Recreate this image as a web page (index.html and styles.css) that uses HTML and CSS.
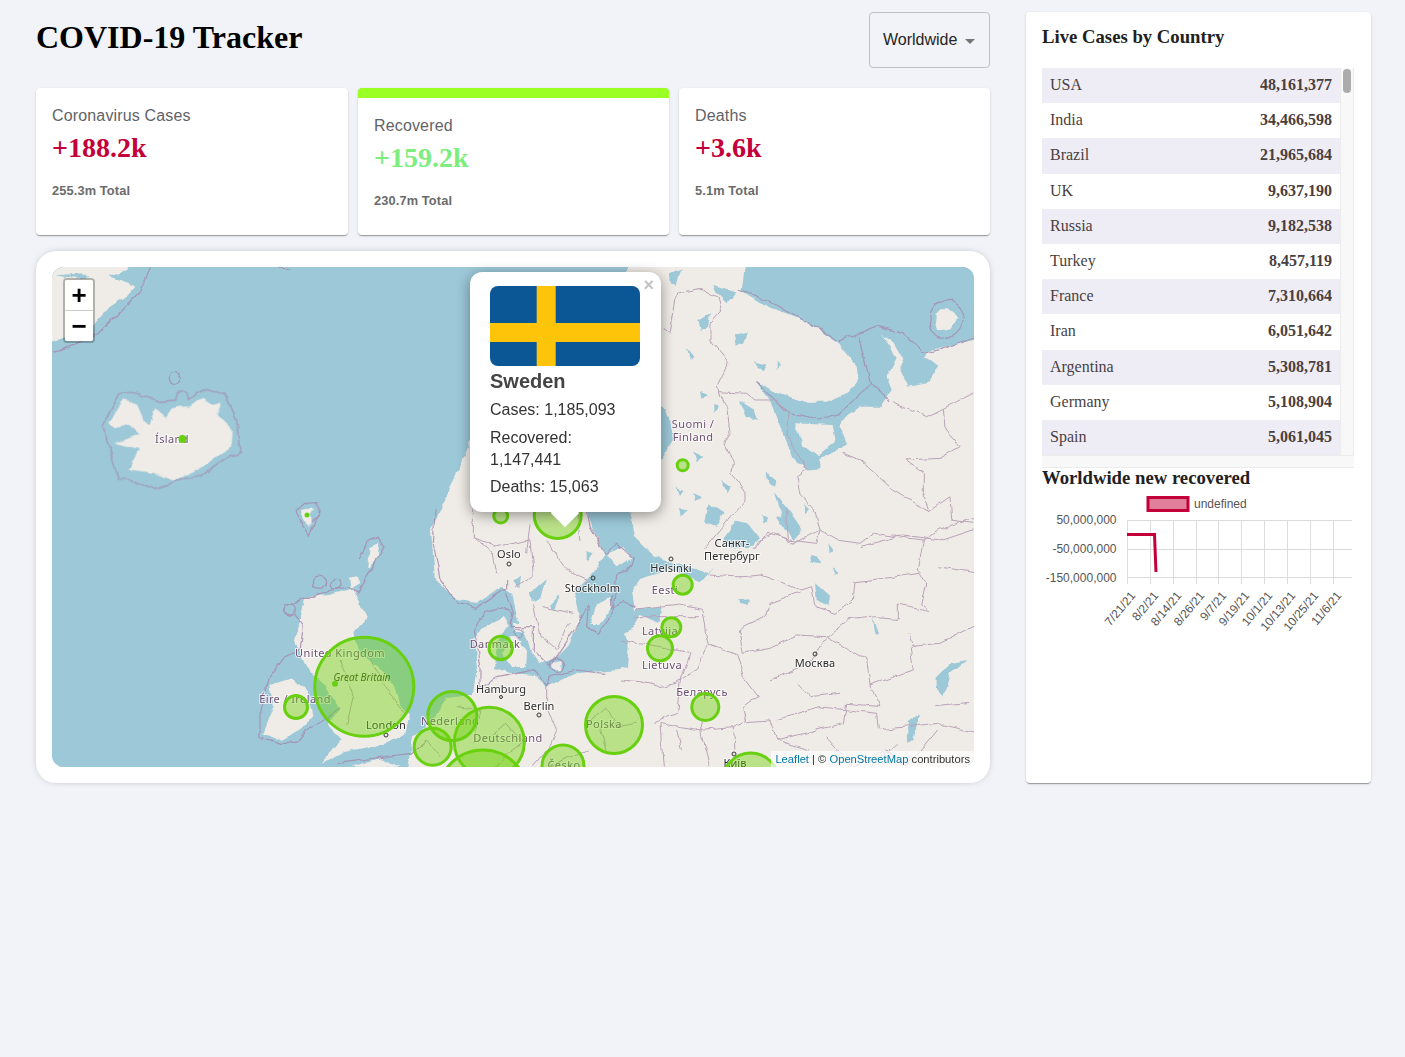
FILE: index.html
```html
<!DOCTYPE html>
<html lang="en">
<head>
<meta charset="utf-8">
<title>COVID-19 Tracker</title>
<link rel="stylesheet" href="styles.css">
</head>
<body>
<div class="app">
  <main class="left">
    <header class="header">
      <h1 class="title">COVID-19 Tracker</h1>
      <div class="select"><span>Worldwide</span><i class="caret"></i></div>
    </header>
    <section class="stats">
      <article class="stat"><p class="stat-label">Coronavirus Cases</p><h2 class="stat-num red">+188.2k</h2><p class="stat-total">255.3m Total</p></article>
      <article class="stat active"><p class="stat-label">Recovered</p><h2 class="stat-num green">+159.2k</h2><p class="stat-total">230.7m Total</p></article>
      <article class="stat"><p class="stat-label">Deaths</p><h2 class="stat-num red">+3.6k</h2><p class="stat-total">5.1m Total</p></article>
    </section>
    <section class="map-card">
      <div class="map">
        <svg class="map-svg" viewBox="52 267 922 500" width="922" height="500" aria-label="Map">
          <defs>
            <filter id="rough" x="-3%" y="-3%" width="106%" height="106%" color-interpolation-filters="sRGB">
              <feTurbulence type="fractalNoise" baseFrequency=".07" numOctaves="3" seed="7"/>
              <feDisplacementMap in="SourceGraphic" scale="6" xChannelSelector="R" yChannelSelector="G"/>
            </filter>
          </defs>
          <rect class="sea" x="40" y="250" width="960" height="540"/>
          <g filter="url(#rough)">
            <!-- Greenland, Iceland, Faroe -->
            <g transform="translate(40 260) scale(.33333)">
              <path class="land" d="M0 0H285L262 30 205 52 285 78 255 112 210 140 165 190 120 215 0 262Z"/>
              <path class="sea" d="M50 46 130 40 150 52 120 54 70 50Z"/>
              <path class="maritime" d="M36 278 170 225 300 95 332 20M716 22Q735 30 750 22"/>
              <path class="land" d="M205 490 222 465 252 418 290 430 312 482 328 492 345 448 378 470 395 445 420 440 450 440 490 410 518 432 545 425 530 462 578 510 575 555 500 612 430 650 400 662 345 640 265 628 296 570 222 552 298 522 262 490 225 505Z"/>
              <path class="maritime" d="M187 495 240 400 275 397 355 425 408 420A19 19 0 1 1 445 415L490 390 555 405 590 480 597 552A15 15 0 1 1 575 585L480 650 440 655 340 686 255 655 235 655Z"/>
              <circle class="maritime" cx="403" cy="355" r="18"/>
              <path class="maritime" d="M765 755Q790 722 835 725 850 770 810 790"/>
              <path class="land" d="M785 750 825 742 810 765 795 770Z"/>
            </g>
            <!-- Scandinavia, Russia and continental Europe -->
            <path class="land" d="M640 250 620 280 560 310 500 370 470 440 450 490 431 530 435 580 457 600 477 603 503 587 503 617 487 625 473 637 477 667 473 694 447 697 430 723 413 737 403 790H1000V250Z"/>
            <!-- Skagerrak, Kattegat, Baltic, Bothnia, gulfs of Finland and Riga -->
            <path class="sea" d="M500 587 512 592 517 617 527 637 530 650 540 664 557 657 570 643 580 617 575 592 596 570 605 553 593 530 587 510 620 470 640 430 661 405 670 418 673 440 660 460 640 490 630 510 635 537 653 555 670 563 687 566 707 573 715 568 707 574 700 582 673 570 640 580 632 592 635 610 663 607 657 623 640 614 629 642 627 668 620 670 577 673 547 687 533 675 510 673 495 668 497 642 508 625 503 617Z"/>
            <!-- Baltic islands -->
            <path class="land" d="M605 553 623 547 632 557 617 567ZM596 607 610 595 612 607 598 625 590 625ZM625 633 640 623V663L632 657ZM552 662 563 660 562 670 553 670ZM510 637 518 637 527 652 526 667 512 667 503 653ZM513 623 522 623 522 632 515 632ZM640 584 651 583 652 590 641 593Z"/>
            <!-- Barents and White seas -->
            <g transform="translate(460 260) scale(.33333)">
              <path class="sea" d="M860 -30 845 95 900 130 1030 180 1130 245 1190 320 1195 360 1170 395 1100 425 1020 425 940 395 885 360 930 420 960 500 1000 590 1040 632 1078 628 1078 590 1130 575 1162 555 1138 500 1160 470 1200 440 1260 440 1295 390 1280 350 1310 290 1260 220 1300 250 1330 300 1318 325 1345 380 1400 370 1435 320 1395 290 1400 275 1600 225V-30Z"/>
              <path class="land" d="M1005 490 1115 495 1125 545 1075 585 1030 560Z"/>
              <path class="land" d="M1430 165 1455 140 1495 170 1470 205 1435 212 1428 190Z"/>
              <path class="maritime" d="M1408 190Q1415 125 1470 118 1515 140 1515 175 1495 235 1440 235 1410 225 1408 190ZM835 90 880 105 950 135 1060 195 1135 245 1250 198 1330 220 1385 270 1415 278 1560 228M1195 228 1232 370 1140 460 1075 480 985 460 890 365M1232 370 1290 425"/>
              <path class="lake" d="M630 40 665 25 650 75 632 70ZM760 75 830 95 800 130 770 100ZM715 180 750 160 745 195 722 210ZM825 225 860 215 850 250 830 260ZM880 310 920 320 905 335ZM950 300 960 320 950 330ZM680 265 700 290 690 300ZM720 395 745 405 725 415ZM840 420 880 445 890 480 860 470ZM760 435 775 440 760 460ZM700 575 730 590 710 610ZM920 635 950 660 945 680 925 670ZM780 660 810 680 800 700ZM745 730 790 760 770 800 735 790ZM650 680 670 690 660 705ZM700 700 725 710 705 730ZM660 740 680 750 665 770ZM945 700 985 750 1025 810 1000 840 975 790 960 750ZM815 800 860 795 890 840 880 860 800 860ZM905 765 925 775 910 790ZM1035 730 1050 745 1035 760Z"/>
              <path class="border" d="M608 205 630 222 650 100 720 85 775 115 785 150 750 190 750 240 790 290 805 310 772 375 800 440 810 520 795 550 820 610 815 640 855 690 855 720 780 810 730 870"/>
              <path class="border" d="M780 395 860 400 885 420 950 420 985 460 985 530 1040 630 1010 650 1020 700 1060 740 1080 810 1000 850 940 820 900 840 880 870"/>
              <path class="border" d="M1560 390 1450 445 1400 470 1300 425M1450 445 1455 510 1500 560 1440 595 1335 600 1390 640 1390 710 1405 755 1470 710 1475 780 1540 790M1200 860 1330 825 1440 840 1560 800M1150 580 1200 600 1300 690 1400 750"/>
            </g>
            <!-- Britain, Ireland, North Sea borders -->
            <g transform="translate(240 510) scale(.33333)">
              <path class="land" d="M388 112 418 95 412 150 385 175ZM330 200 358 195 360 220 335 235ZM178 340 195 262 228 258 270 255 340 235 345 252 380 320 340 370 355 430 420 475 465 530 480 580 510 615 495 675 440 700 330 722 245 758 305 685 260 640 300 595 262 535 240 515 200 470 165 395Z"/>
              <path class="land" d="M88 525 160 505 200 545 220 615 190 652 125 690 70 670 102 590Z"/>
              <path class="land" d="M182 0 210 0 212 50 195 35Z"/>
              <path class="land" d="M330 770 420 745 480 770Z"/>
              <path class="maritime" d="M168 5 208 78 240 0M355 150 378 95 415 82 432 110 400 170 380 200 350 250 330 230 280 240 220 262 185 262 165 285 135 285 135 310 162 318 190 350 180 420 135 440 85 505 60 600 60 680 120 700 170 700 210 650 260 628 300 590M600 205 650 280 710 295 800 235 800 210M1040 0 1050 50 1095 130 1130 100 1180 145 1160 185 1130 195 1120 300 1150 275 1190 290M795 235 820 310 810 350 880 350 880 420 930 470 980 395 1045 285 1040 350 1075 370 1115 310 1115 250M700 360 735 305 790 290 815 310 810 350M700 360 720 470 720 540 760 505 880 480 925 530M925 530 930 500 1010 480 1090 490M585 0 580 100 600 205M290 760 510 730 560 690"/>
              <circle class="maritime" cx="237" cy="218" r="20"/>
              <circle class="maritime" cx="288" cy="222" r="15"/>
              <circle class="maritime" cx="150" cy="300" r="16"/>
              <circle class="maritime" cx="952" cy="465" r="22"/>
              <circle class="maritime" cx="835" cy="370" r="14"/>
              <path class="lake" d="M870 250 920 205 905 265 875 270ZM930 285 960 255 940 300ZM820 215 840 200 835 235ZM1040 120 1060 130 1040 160Z"/>
              <path class="border" d="M700 0 700 80 770 110 870 90 880 200 825 230M700 80 760 130 770 190M920 90 980 180 1050 210 1010 250M880 280 900 380 950 420 985 340M905 290 1000 310M745 680 800 640 850 700 760 770M650 590 720 600 700 700M300 450 340 560 320 650M390 440 440 540 500 610M560 690 600 740M920 530 920 590 950 660 930 710 880 770M1040 640 1100 590 1130 650 1190 640M1080 650 1100 730M920 770 1040 720M860 130 870 40M1010 0 1020 90"/>
            </g>
            <!-- Russia and Baltic region borders -->
            <g transform="translate(620 510) scale(.33333)">
              <path class="lake" d="M310 88 350 32 385 40 420 85 385 118 335 112ZM470 15 510 25 545 70 495 60ZM570 135 595 140 600 160 575 155ZM585 220 630 260 625 285 590 270ZM358 268 385 265 380 285 360 282ZM640 170 658 190 650 195ZM760 320 780 370 770 375ZM950 500 990 460 1040 450 990 490 970 560 950 530ZM625 100 640 120 630 130ZM860 640 900 610 880 690 865 700Z"/>
              <path class="border" d="M262 195 340 200 375 200 420 195 480 215 540 240 575 230 585 290 645 310 700 270 705 215 795 205 900 190 920 225 905 285 930 305 835 285 835 325 770 320 680 330 620 380 530 375 450 415 370 430 355 360 440 320 450 280 540 245"/>
              <path class="border" d="M245 298 255 360 265 405 350 430 370 500 415 560 370 590 380 635 450 630 470 690 570 720M0 510 60 515 120 530 170 520 230 480 265 405M210 430 180 520 170 610 100 640M120 640 220 660 340 650 380 630M240 630 245 680 270 770M120 640 130 770M170 660 185 720M340 650 345 720M0 390 80 405 205 430M40 320 240 320M50 300 180 285 245 298"/>
              <path class="border" d="M500 0 505 90 440 70 405 120M505 90 590 100 600 60 650 90 720 100 760 70 910 90 950 60 1080 20M910 90 895 180 905 190M955 170 1080 190M450 510 570 460 620 380 740 450 750 525 880 480 870 410 960 400 1080 340M750 525 780 590 680 580 670 640 470 690M530 520 570 560 660 550M470 630 600 590 770 610 775 660 950 640 1080 670M870 370 880 410M620 680 700 770 800 720 860 770 950 660M940 590 1050 580M750 770 830 700"/>
            </g>
          </g>
          <!-- place labels, part of the tiles so they lie under the circles -->
          <g class="labels">
            <text class="country" x="172" y="443">Ísland</text>
            <text class="country" x="693" y="428">Suomi /</text>
            <text class="country" x="693" y="441">Finland</text>
            <text class="country" x="340" y="657">United Kingdom</text>
            <text class="country" x="295" y="703">Éire / Ireland</text>
            <text class="country" x="495" y="648">Danmark</text>
            <text class="country" x="450" y="725">Nederland</text>
            <text class="country" x="508" y="742">Deutschland</text>
            <text class="country" x="604" y="728">Polska</text>
            <text class="country" x="564" y="769">Česko</text>
            <text class="country" x="665" y="594">Eesti</text>
            <text class="country" x="660" y="635">Latvija</text>
            <text class="country" x="662" y="669">Lietuva</text>
            <text class="country" x="702" y="696">Беларусь</text>
            <text class="city" x="509" y="558">Oslo</text>
            <text class="city" x="592.500" y="592">Stockholm</text>
            <text class="city" x="671" y="572">Helsinki</text>
            <text class="city" x="732" y="547">Санкт-</text>
            <text class="city" x="732" y="560">Петербург</text>
            <text class="city" x="815" y="667">Москва</text>
            <text class="city" x="501" y="693">Hamburg</text>
            <text class="city" x="539" y="710">Berlin</text>
            <text class="city" x="386" y="729">London</text>
            <text class="city" x="735" y="767">Київ</text>
            <text class="italic" x="362" y="681">Great Britain</text>
          </g>
          <g class="capitals">
            <circle cx="509" cy="564" r="2"/>
            <circle cx="593" cy="578" r="2"/>
            <circle cx="671" cy="559" r="2"/>
            <circle cx="815" cy="654" r="2"/>
            <circle cx="539" cy="715" r="2"/>
            <circle cx="386" cy="735" r="2"/>
            <circle cx="734" cy="754" r="2"/>
            <circle cx="501" cy="697" r="1.500"/>
          </g>
          <g class="cases">
            <circle cx="483" cy="795" r="45"/>
            <circle cx="750.700" cy="781" r="28"/>
            <circle cx="563" cy="766" r="21"/>
            <circle cx="489.300" cy="742.300" r="35"/>
            <circle cx="432.700" cy="746.700" r="18.500"/>
            <circle cx="452.300" cy="716" r="24.500"/>
            <circle cx="364.300" cy="686.700" r="49.500"/>
            <circle cx="296" cy="707" r="11.500"/>
            <circle cx="500.700" cy="648" r="11.700"/>
            <circle cx="614" cy="725" r="28.500"/>
            <circle cx="557.700" cy="515" r="23.500"/>
            <circle cx="500.700" cy="516" r="7"/>
            <circle cx="682.700" cy="465.300" r="5.500"/>
            <circle cx="682.700" cy="584.700" r="9.500"/>
            <circle cx="671.300" cy="627.300" r="9.500"/>
            <circle cx="660" cy="648.300" r="12.500"/>
            <circle cx="705.300" cy="707" r="13.500"/>
          </g>
          <g class="dots">
            <circle cx="182.500" cy="439" r="4"/>
            <circle cx="307" cy="515" r="2.500"/>
            <circle cx="335" cy="683.700" r="3"/>
          </g>
        </svg>
        <div class="zoom-bar">
          <a class="zoom-btn">+</a>
          <a class="zoom-btn">−</a>
        </div>
        <div class="attribution"><a class="attr-link">Leaflet</a> | © <a class="attr-link">OpenStreetMap</a> contributors</div>
      </div>
      <div class="popup">
        <span class="popup-close">×</span>
        <svg class="flag" viewBox="0 0 150 80" width="150" height="80" aria-label="Flag of Sweden">
          <rect width="150" height="80" fill="#0b5695"/>
          <rect x="46.700" width="19" height="80" fill="#fec40a"/>
          <rect y="37" width="150" height="19" fill="#fec40a"/>
        </svg>
        <div class="popup-name">Sweden</div>
        <div class="popup-line">Cases: 1,185,093</div>
        <div class="popup-line">Recovered: 1,147,441</div>
        <div class="popup-line popup-last">Deaths: 15,063</div>
        <i class="popup-tip"></i>
      </div>
    </section>
  </main>
  <aside class="side">
    <h3 class="side-title">Live Cases by Country</h3>
    <div class="table">
      <div class="rows">
        <div class="row"><span>USA</span><strong>48,161,377</strong></div>
        <div class="row"><span>India</span><strong>34,466,598</strong></div>
        <div class="row"><span>Brazil</span><strong>21,965,684</strong></div>
        <div class="row"><span>UK</span><strong>9,637,190</strong></div>
        <div class="row"><span>Russia</span><strong>9,182,538</strong></div>
        <div class="row"><span>Turkey</span><strong>8,457,119</strong></div>
        <div class="row"><span>France</span><strong>7,310,664</strong></div>
        <div class="row"><span>Iran</span><strong>6,051,642</strong></div>
        <div class="row"><span>Argentina</span><strong>5,308,781</strong></div>
        <div class="row"><span>Germany</span><strong>5,108,904</strong></div>
        <div class="row"><span>Spain</span><strong>5,061,045</strong></div>
      </div>
      <div class="track-v"><i class="thumb"></i></div>
      <div class="track-h"></div>
    </div>
    <h3 class="chart-title">Worldwide new recovered</h3>
    <svg class="chart" viewBox="1042 490 312 150" width="312" height="150" aria-label="Chart">
      <rect class="legend-box" x="1148" y="497.500" width="40" height="13"/>
      <text class="chart-text" x="1194" y="508">undefined</text>
      <path class="grid" d="M1127.500 520.500H1352M1127.500 549.500H1352M1127.500 577.500H1352M1127.500 520V584M1150.500 520V584M1173.500 520V584M1196.500 520V584M1218.500 520V584M1241.500 520V584M1264.500 520V584M1287.500 520V584M1310.500 520V584M1333.500 520V584"/>
      <text class="chart-text end" x="1116.500" y="524">50,000,000</text>
      <text class="chart-text end" x="1116.500" y="553">-50,000,000</text>
      <text class="chart-text end" x="1116.500" y="582">-150,000,000</text>
      <path class="line" d="M1127 534.500H1154.500L1156 572"/>
      <text class="chart-text end" transform="translate(1136 596) rotate(-50)">7/21/21</text>
      <text class="chart-text end" transform="translate(1159 596) rotate(-50)">8/2/21</text>
      <text class="chart-text end" transform="translate(1182 596) rotate(-50)">8/14/21</text>
      <text class="chart-text end" transform="translate(1205 596) rotate(-50)">8/26/21</text>
      <text class="chart-text end" transform="translate(1227 596) rotate(-50)">9/7/21</text>
      <text class="chart-text end" transform="translate(1250 596) rotate(-50)">9/19/21</text>
      <text class="chart-text end" transform="translate(1273 596) rotate(-50)">10/1/21</text>
      <text class="chart-text end" transform="translate(1296 596) rotate(-50)">10/13/21</text>
      <text class="chart-text end" transform="translate(1319 596) rotate(-50)">10/25/21</text>
      <text class="chart-text end" transform="translate(1342 596) rotate(-50)">11/6/21</text>
    </svg>
  </aside>
</div>
</body>
</html>
```
FILE: styles.css
```css
* { box-sizing: border-box; }
html, body { margin: 0; height: 100%; }
body {
  background: #f1f3f8;
  font-family: "Liberation Sans", Arial, sans-serif;
  color: #212121;
}
.app {
  display: flex;
  justify-content: space-between;
  gap: 36px;
  padding: 12px 34px 0 36px;
  height: 1057px;
  align-items: flex-start;
}
.left { width: 954px; flex: none; }
.header {
  display: flex;
  justify-content: space-between;
  align-items: flex-start;
  height: 56px;
  margin-bottom: 20px;
}
.title {
  margin: 4px 0 0;
  font: bold 32px/42px "Liberation Serif", "Times New Roman", serif;
  color: #000;
}
.select {
  width: 121px;
  height: 56px;
  display: flex;
  align-items: center;
  justify-content: space-between;
  padding: 0 14px 0 13px;
  border: 1px solid #c0c1c5;
  border-radius: 4px;
  font-size: 16px;
  color: #252525;
}
.caret {
  width: 0; height: 0;
  border-left: 5px solid transparent;
  border-right: 5px solid transparent;
  border-top: 5px solid #757575;
  margin-top: 2px;
}
.stats {
  display: grid;
  grid-template-columns: 312px 311px 311px;
  gap: 10px;
  margin-bottom: 16px;
}
.stat {
  height: 147px;
  background: #fff;
  border-radius: 4px;
  padding: 16px;
  box-shadow: 0 2px 1px -1px rgba(0,0,0,.2), 0 1px 1px 0 rgba(0,0,0,.14), 0 1px 3px 0 rgba(0,0,0,.12);
}
.stat.active { border-top: 10px solid #9cff23; }
.stat-label { margin: 0; font-size: 16px; line-height: 24px; color: #5f6368; letter-spacing: .15px; }
.stat-num {
  margin: 3px 0 0;
  font: bold 28px/34px "Liberation Serif", "Times New Roman", serif;
}
.red { color: #c4003a; }
.green { color: #7ded7d; }
.stat-total { margin: 16px 0 0; font-size: 12.800px; line-height: 20px; font-weight: bold; color: #6b6b6b; letter-spacing: .13px; }
.map-card {
  position: relative;
  background: #fff;
  border-radius: 20px;
  padding: 16px;
  height: 532px;
  box-shadow: 0 0 8px -4px rgba(0,0,0,.5);
}
.map {
  position: relative;
  width: 922px;
  height: 500px;
  border-radius: 12px;
  overflow: hidden;
  background: #9cc8d8;
}
.map-svg { display: block; }
.sea { fill: #9cc8d8; }
.land { fill: #efebe6; }
.lake { fill: #9cc8d8; }
.maritime { fill: none; stroke: #a68cb0; stroke-width: 1.200px; vector-effect: non-scaling-stroke; opacity: .85; }
.border { fill: none; stroke: #b9a3b9; stroke-width: 1px; vector-effect: non-scaling-stroke; stroke-linejoin: round; }
.cases circle {
  fill: #6dd407;
  fill-opacity: .42;
  stroke: #68d010;
  stroke-width: 3px;
}
.dots circle { fill: #68d010; }
.capitals circle { fill: none; stroke: #333; stroke-width: 1px; }
.labels text {
  font-family: "Noto Sans", sans-serif;
  font-size: 11px;
  text-anchor: middle;
  paint-order: stroke;
  stroke: rgba(255,255,255,.7);
  stroke-width: 2px;
  letter-spacing: .4px;
}
.labels .country { fill: #6e4f74; }
.labels .city { fill: #2a2a2a; letter-spacing: .1px; }
.labels .italic { fill: #33421e; font-style: italic; font-size: 10px; letter-spacing: 0; stroke: none; }
.zoom-bar {
  position: absolute;
  left: 11px;
  top: 11px;
  border: 2px solid rgba(0,0,0,.25);
  border-radius: 4px;
  background-clip: padding-box;
}
.zoom-btn {
  display: block;
  width: 28px;
  height: 30px;
  background: #fff;
  text-align: center;
  font: bold 26px/31px "Liberation Sans", sans-serif;
  color: #000;
}
.zoom-btn:first-child { border-bottom: 1px solid #ccc; border-radius: 2px 2px 0 0; height: 31px; }
.zoom-btn:last-child { border-radius: 0 0 2px 2px; }
.attribution {
  position: absolute;
  right: 0;
  bottom: 0;
  height: 16px;
  padding: 0 4px;
  font-size: 11.200px;
  line-height: 16px;
  color: #333;
  background: rgba(255,255,255,.7);
}
.attr-link { color: #0078a8; }
.popup {
  position: absolute;
  left: 434px;
  top: 21px;
  width: 191px;
  height: 240px;
  padding: 14px 20px 0;
  background: #fff;
  border-radius: 12px;
  box-shadow: 0 3px 14px rgba(0,0,0,.4);
  color: #333;
}
.popup-close {
  position: absolute;
  top: 4px;
  right: 7px;
  font: bold 18px/18px "Liberation Sans", sans-serif;
  color: #c3c3c3;
}
.flag { display: block; border-radius: 8px; }
.popup-name { font-size: 20px; font-weight: bold; line-height: 24px; margin: 3px 0 1px; color: #444; }
.popup-line { font-size: 16px; line-height: 22px; margin-top: 6px; color: #333; }
.popup-last { margin-top: 5px; }
.popup-tip {
  position: absolute;
  left: 85px;
  top: 231px;
  width: 20px;
  height: 20px;
  background: #fff;
  transform: rotate(45deg);
}
.side {
  width: 345px;
  height: 771px;
  flex: none;
  background: #fff;
  border-radius: 4px;
  padding: 14px 16px;
  box-shadow: 0 2px 1px -1px rgba(0,0,0,.2), 0 1px 1px 0 rgba(0,0,0,.14), 0 1px 3px 0 rgba(0,0,0,.12);
}
.side-title {
  margin: 0 0 21px;
  font: bold 18.720px/21px "Liberation Serif", serif;
  color: #212121;
}
.table {
  width: 312px;
  height: 400px;
  display: grid;
  grid-template-columns: 298px 14px;
  grid-template-rows: 387px 13px;
  color: #4a3f40;
  font: 16px/19px "Liberation Serif", serif;
}
.rows { overflow: hidden; }
.track-v {
  background: #f8f8f8;
  border-left: 1px solid #ececec;
  border-right: 1px solid #ececec;
  padding: 1px 0 0 2px;
}
.thumb {
  display: block;
  width: 8px;
  height: 24px;
  border-radius: 4px;
  background: #acacac;
}
.track-h {
  grid-column: 1 / 3;
  background: #f8f8f8;
  border-top: 1px solid #ececec;
  border-bottom: 1px solid #ececec;
}
.row {
  display: flex;
  justify-content: space-between;
  align-items: center;
  height: 35.200px;
  padding: 0 8px 2px;
}
.row:nth-child(odd) { background: #eeedf6; }
.chart-title {
  margin: 0 0 3px;
  font: bold 18.720px/19px "Liberation Serif", serif;
  color: #212121;
}
.chart { display: block; }
.legend-box { fill: rgba(196,0,58,.5); stroke: #c4003a; stroke-width: 3px; }
.chart-text { font: 12px "Liberation Sans", sans-serif; fill: #555; }
.end { text-anchor: end; }
.grid { fill: none; stroke: #dcdcdc; stroke-width: 1px; }
.line { fill: none; stroke: #c4003a; stroke-width: 3px; }
```
